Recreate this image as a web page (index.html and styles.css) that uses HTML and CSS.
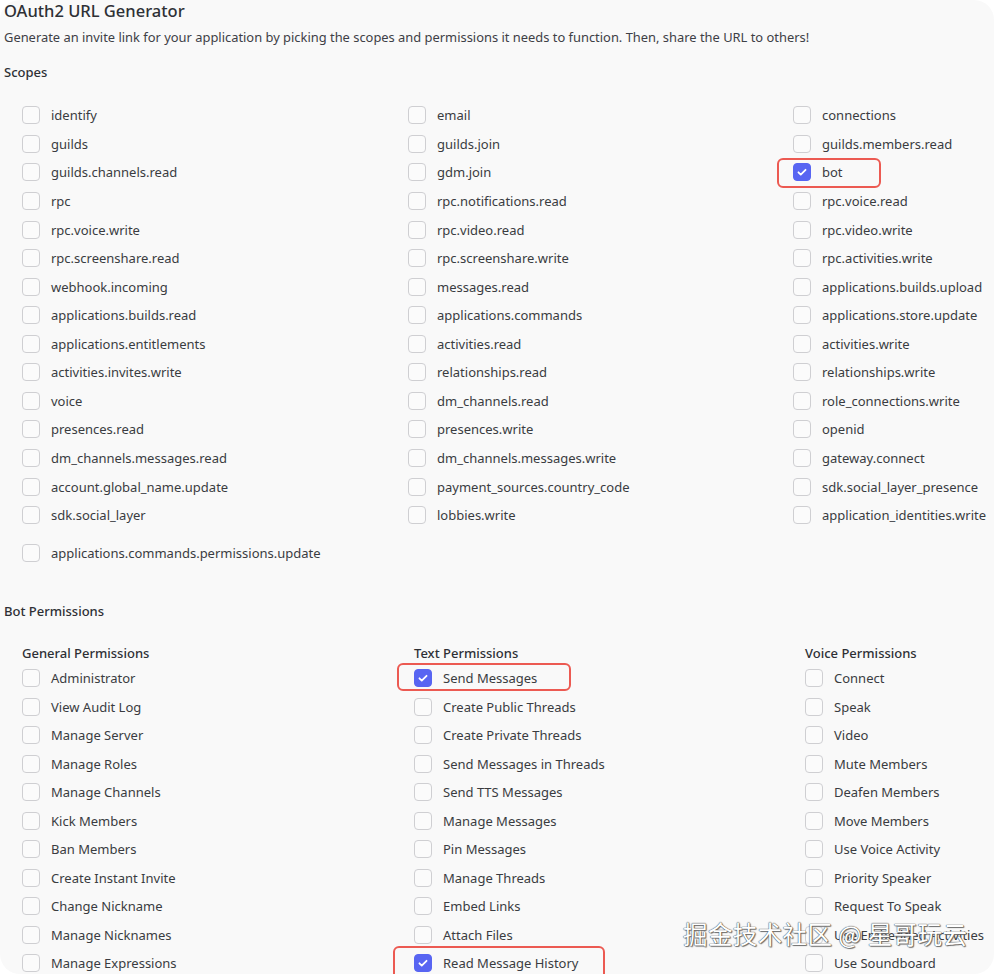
FILE: index.html
```html
<!DOCTYPE html>
<html lang="en">
<head>
<meta charset="utf-8">
<title>OAuth2 URL Generator</title>
<link rel="stylesheet" href="styles.css">
</head>
<body>
<div class="page">
  <h1 class="title">OAuth2 URL Generator</h1>
  <p class="sub">Generate an invite link for your application by picking the scopes and permissions it needs to function. Then, share the URL to others!</p>
  <h2 class="label label-scopes">Scopes</h2>
  <div class="scopes">
    <label class="row"><span class="box"></span>identify</label>
    <label class="row"><span class="box"></span>email</label>
    <label class="row"><span class="box"></span>connections</label>
    <label class="row"><span class="box"></span>guilds</label>
    <label class="row"><span class="box"></span>guilds.join</label>
    <label class="row"><span class="box"></span>guilds.members.read</label>
    <label class="row"><span class="box"></span>guilds.channels.read</label>
    <label class="row"><span class="box"></span>gdm.join</label>
    <label class="row"><span class="box on"><svg viewBox="0 0 18 18"><path d="M5 9.3l2.6 2.6L13 6.5"/></svg></span>bot</label>
    <label class="row"><span class="box"></span>rpc</label>
    <label class="row"><span class="box"></span>rpc.notifications.read</label>
    <label class="row"><span class="box"></span>rpc.voice.read</label>
    <label class="row"><span class="box"></span>rpc.voice.write</label>
    <label class="row"><span class="box"></span>rpc.video.read</label>
    <label class="row"><span class="box"></span>rpc.video.write</label>
    <label class="row"><span class="box"></span>rpc.screenshare.read</label>
    <label class="row"><span class="box"></span>rpc.screenshare.write</label>
    <label class="row"><span class="box"></span>rpc.activities.write</label>
    <label class="row"><span class="box"></span>webhook.incoming</label>
    <label class="row"><span class="box"></span>messages.read</label>
    <label class="row"><span class="box"></span>applications.builds.upload</label>
    <label class="row"><span class="box"></span>applications.builds.read</label>
    <label class="row"><span class="box"></span>applications.commands</label>
    <label class="row"><span class="box"></span>applications.store.update</label>
    <label class="row"><span class="box"></span>applications.entitlements</label>
    <label class="row"><span class="box"></span>activities.read</label>
    <label class="row"><span class="box"></span>activities.write</label>
    <label class="row"><span class="box"></span>activities.invites.write</label>
    <label class="row"><span class="box"></span>relationships.read</label>
    <label class="row"><span class="box"></span>relationships.write</label>
    <label class="row"><span class="box"></span>voice</label>
    <label class="row"><span class="box"></span>dm_channels.read</label>
    <label class="row"><span class="box"></span>role_connections.write</label>
    <label class="row"><span class="box"></span>presences.read</label>
    <label class="row"><span class="box"></span>presences.write</label>
    <label class="row"><span class="box"></span>openid</label>
    <label class="row"><span class="box"></span>dm_channels.messages.read</label>
    <label class="row"><span class="box"></span>dm_channels.messages.write</label>
    <label class="row"><span class="box"></span>gateway.connect</label>
    <label class="row"><span class="box"></span>account.global_name.update</label>
    <label class="row"><span class="box"></span>payment_sources.country_code</label>
    <label class="row"><span class="box"></span>sdk.social_layer_presence</label>
    <label class="row"><span class="box"></span>sdk.social_layer</label>
    <label class="row"><span class="box"></span>lobbies.write</label>
    <label class="row"><span class="box"></span>application_identities.write</label>
  </div>
  <div class="scopes-extra">
    <label class="row"><span class="box"></span>applications.commands.permissions.update</label>
  </div>

  <h2 class="label label-bot">Bot Permissions</h2>
  <div class="perms">
    <div class="col">
      <h3 class="col-title">General Permissions</h3>
      <label class="row"><span class="box"></span>Administrator</label>
      <label class="row"><span class="box"></span>View Audit Log</label>
      <label class="row"><span class="box"></span>Manage Server</label>
      <label class="row"><span class="box"></span>Manage Roles</label>
      <label class="row"><span class="box"></span>Manage Channels</label>
      <label class="row"><span class="box"></span>Kick Members</label>
      <label class="row"><span class="box"></span>Ban Members</label>
      <label class="row"><span class="box"></span>Create Instant Invite</label>
      <label class="row"><span class="box"></span>Change Nickname</label>
      <label class="row"><span class="box"></span>Manage Nicknames</label>
      <label class="row"><span class="box"></span>Manage Expressions</label>
    </div>
    <div class="col">
      <h3 class="col-title">Text Permissions</h3>
      <label class="row"><span class="box on"><svg viewBox="0 0 18 18"><path d="M5 9.3l2.6 2.6L13 6.5"/></svg></span>Send Messages</label>
      <label class="row"><span class="box"></span>Create Public Threads</label>
      <label class="row"><span class="box"></span>Create Private Threads</label>
      <label class="row"><span class="box"></span>Send Messages in Threads</label>
      <label class="row"><span class="box"></span>Send TTS Messages</label>
      <label class="row"><span class="box"></span>Manage Messages</label>
      <label class="row"><span class="box"></span>Pin Messages</label>
      <label class="row"><span class="box"></span>Manage Threads</label>
      <label class="row"><span class="box"></span>Embed Links</label>
      <label class="row"><span class="box"></span>Attach Files</label>
      <label class="row"><span class="box on"><svg viewBox="0 0 18 18"><path d="M5 9.3l2.6 2.6L13 6.5"/></svg></span>Read Message History</label>
    </div>
    <div class="col">
      <h3 class="col-title">Voice Permissions</h3>
      <label class="row"><span class="box"></span>Connect</label>
      <label class="row"><span class="box"></span>Speak</label>
      <label class="row"><span class="box"></span>Video</label>
      <label class="row"><span class="box"></span>Mute Members</label>
      <label class="row"><span class="box"></span>Deafen Members</label>
      <label class="row"><span class="box"></span>Move Members</label>
      <label class="row"><span class="box"></span>Use Voice Activity</label>
      <label class="row"><span class="box"></span>Priority Speaker</label>
      <label class="row"><span class="box"></span>Request To Speak</label>
      <label class="row"><span class="box"></span>Use Embedded Activities</label>
      <label class="row"><span class="box"></span>Use Soundboard</label>
    </div>
  </div>

  <div class="mark mark-bot"></div>
  <div class="mark mark-send"></div>
  <div class="mark mark-history"></div>
  <div class="watermark">掘金技术社区 @ 星哥玩云</div>
</div>
</body>
</html>
```

FILE: styles.css
```css
* { box-sizing: border-box; }
html, body { margin: 0; padding: 0; background: #ffffff; }
body {
  font-family: "Noto Sans", "Liberation Sans", sans-serif;
  color: #3a3c41;
  overflow: hidden;
}
.page {
  position: relative;
  background: #f9f9f9;
  border-radius: 20px;
  height: 974px;
  padding: 0 4px;
  overflow: hidden;
}
.title {
  margin: 0;
  font-size: 16.5px;
  line-height: 22px;
  font-weight: 500;
  color: #2e3035;
}
.sub {
  margin: 6px 0 0;
  font-size: 12.9px;
  line-height: 18px;
  color: #3e4046;
}
.label {
  margin: 0;
  font-size: 13px;
  line-height: 18px;
  font-weight: 500;
  color: #2e3035;
}
.label-scopes { margin-top: 17px; }
.label-bot { margin-top: 35px; }

.row {
  display: flex;
  align-items: center;
  gap: 11px;
  font-size: 13px;
  line-height: 18px;
  white-space: nowrap;
}
.box {
  flex: none;
  width: 18px;
  height: 18px;
  border: 1px solid #cfcfd2;
  border-radius: 4px;
  background: #fbfbfb;
  display: flex;
  align-items: center;
  justify-content: center;
}
.box.on {
  background: #5865f2;
  border-color: #5865f2;
}
.box svg { width: 18px; height: 18px; }
.box svg path {
  fill: none;
  stroke: #ffffff;
  stroke-width: 2;
  stroke-linecap: round;
  stroke-linejoin: round;
}

.scopes {
  margin-top: 20px;
  padding-left: 18px;
  display: grid;
  grid-template-columns: 386px 385px 1fr;
  grid-auto-rows: 28.57px;
}
.scopes-extra {
  padding-left: 18px;
  margin-top: 9px;
}
.scopes-extra .row { height: 28.57px; }

.perms {
  margin-top: 24px;
  padding-left: 18px;
  display: grid;
  grid-template-columns: 392px 391px 1fr;
}
.col { display: flex; flex-direction: column; }
.col-title {
  margin: 0 0 2px;
  font-size: 13px;
  line-height: 18px;
  font-weight: 500;
  color: #2e3035;
}
.col .row { height: 28.5px; }

.mark {
  position: absolute;
  border: 2px solid #ec5a52;
  border-radius: 6px;
}
.mark-bot { left: 777px; top: 158px; width: 104px; height: 30px; }
.mark-send { left: 397px; top: 663px; width: 174px; height: 28px; }
.mark-history { left: 393px; top: 946px; width: 212px; height: 40px; }

.watermark {
  position: absolute;
  left: 683px;
  top: 917px;
  font-family: "Noto Sans CJK SC", sans-serif;
  font-size: 24.5px;
  line-height: 34px;
  color: #ffffff;
  letter-spacing: 0.4px;
  text-shadow: 0 0 1px #444, 0 0 1px #444, 1px 1px 1px #777;
  white-space: nowrap;
}
```
